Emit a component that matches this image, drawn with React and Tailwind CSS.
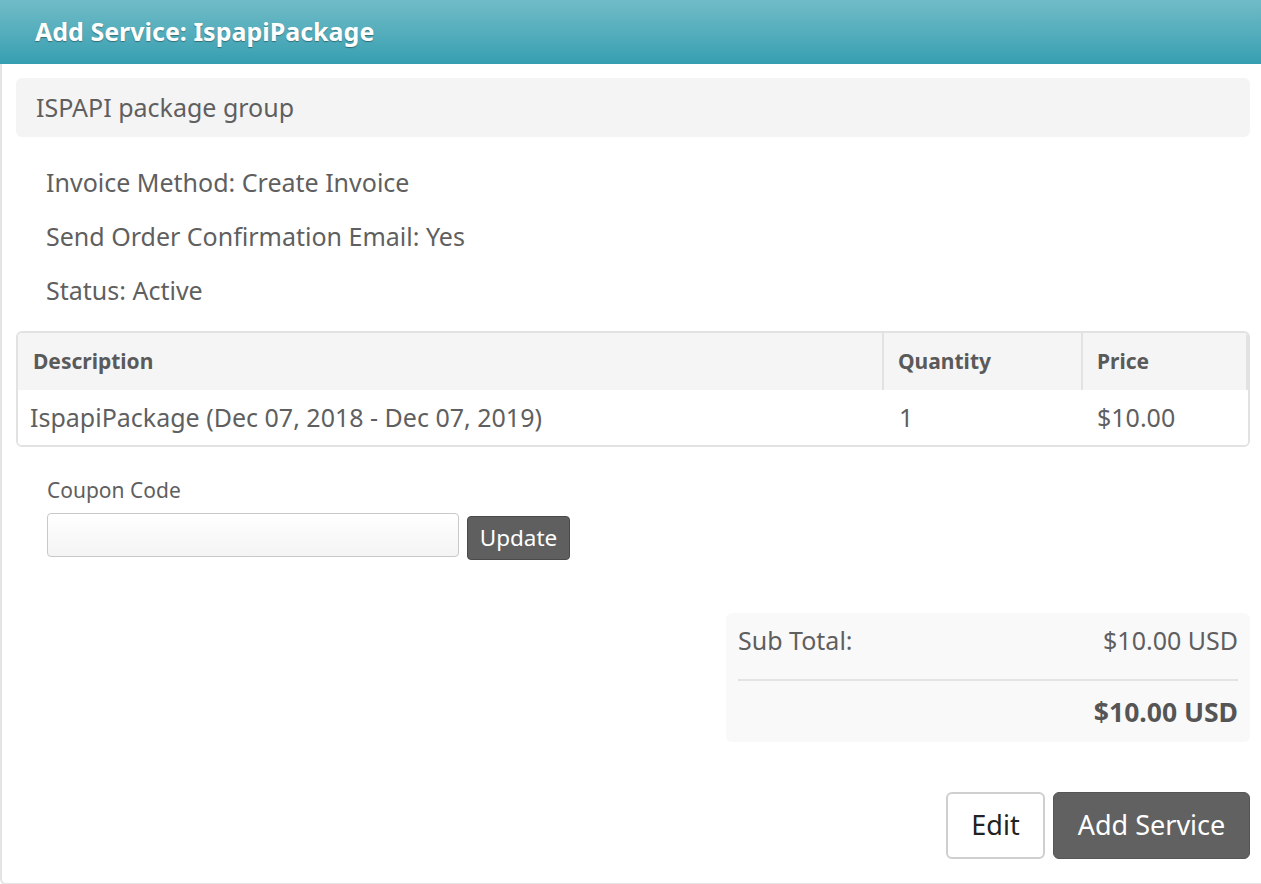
export default function App() {
  return (
    <div
      className="w-[1261px] h-[884px] overflow-hidden bg-white text-[#5f5f5f]"
      style={{ fontFamily: '"Noto Sans", "Open Sans", sans-serif' }}
    >
      <div className="w-[1275px] h-[885px] border-l-2 border-b-2 border-[#e4e4e4] rounded-bl-md flex flex-col">
        <div className="h-[64px] -ml-[2px] flex items-center px-[35px] bg-gradient-to-b from-[#70bcc7] to-[#349fb1]">
          <h1 className="text-white font-bold text-[25px] [text-shadow:0_1px_1px_rgba(0,0,0,0.35)]">
            Add Service: IspapiPackage
          </h1>
        </div>

        <div className="w-[1261px] pl-[14px] pr-[13px] pt-[14px] flex flex-col">
          <div className="h-[59px] bg-[#f4f4f4] rounded-md flex items-center px-[20px] text-[25px]">
            ISPAPI package group
          </div>

          <div className="pl-[30px] pt-[29px] flex flex-col gap-[22px] text-[25px] leading-[32px]">
            <p>Invoice Method: Create Invoice</p>
            <p>Send Order Confirmation Email: Yes</p>
            <p>Status: Active</p>
          </div>

          <div className="mt-[25px] border-2 border-[#e2e2e2] rounded-md overflow-hidden">
            <div className="flex h-[57px] bg-[#f5f5f5] font-bold text-[21px] text-[#5a5a5a]">
              <div className="w-[866px] flex items-center px-[15px] border-r-2 border-[#e2e2e2]">Description</div>
              <div className="w-[199px] flex items-center px-[14px] border-r-2 border-[#e2e2e2]">Quantity</div>
              <div className="flex-1 flex items-center px-[14px] border-r-2 border-[#e2e2e2]">Price</div>
            </div>
            <div className="flex h-[55px] text-[25px] bg-white">
              <div className="w-[866px] flex items-center px-[12px]">IspapiPackage (Dec 07, 2018 - Dec 07, 2019)</div>
              <div className="w-[199px] flex items-center px-[15px]">1</div>
              <div className="flex-1 flex items-center px-[14px]">$10.00</div>
            </div>
          </div>

          <div className="pl-[31px] pt-[30px] flex flex-col">
            <label className="text-[21px] leading-[26px]">Coupon Code</label>
            <div className="flex items-start gap-[8px] mt-[10px]">
              <input
                type="text"
                className="w-[412px] h-[44px] border border-[#c8c8c8] rounded-[4px] bg-gradient-to-b from-white to-[#f4f4f4] outline-none px-3"
              />
              <button className="mt-[3px] w-[103px] h-[44px] bg-[#5f5f5f] border border-[#4a4a4a] rounded-[4px] text-white text-[22.5px]">
                Update
              </button>
            </div>
          </div>

          <div className="flex justify-end mt-[53px]">
            <div className="w-[524px] h-[129px] bg-[#f9f9f9] rounded-md px-[12px] pt-[12px]">
              <div className="flex justify-between text-[25px] leading-[30px]">
                <span>Sub Total:</span>
                <span>$10.00 USD</span>
              </div>
              <div className="mt-[24px] border-t-2 border-[#e3e3e3]" />
              <div className="flex justify-end text-[26.5px] font-bold leading-[34px] mt-[14px] text-[#555]">
                $10.00 USD
              </div>
            </div>
          </div>

          <div className="flex justify-end gap-[8px] mt-[50px]">
            <button className="w-[99px] h-[67px] border-2 border-[#cfcfcf] rounded-md bg-white text-[#222] text-[27px]">
              Edit
            </button>
            <button className="w-[197px] h-[67px] bg-[#616161] border border-[#555] rounded-md text-white text-[27px]">
              Add Service
            </button>
          </div>
        </div>
      </div>
    </div>
  );
}
